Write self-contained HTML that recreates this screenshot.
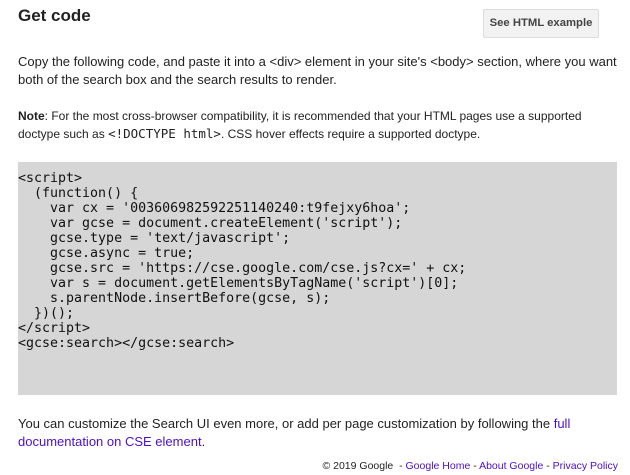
<!DOCTYPE html>
<html><head><style>
body{margin:0;background:#fff;font-family:"Liberation Sans",Arial,sans-serif;color:#222;width:630px;height:475px;overflow:hidden;position:relative}
.a{position:absolute;left:18px;white-space:nowrap}
h1{position:absolute;left:18px;top:6px;margin:0;font-size:17px;font-weight:bold}
.btn{position:absolute;left:483px;top:9px;width:114px;height:27px;background:#f2f2f2;border:1px solid #dcdcdc;border-radius:2px;font-size:11.3px;font-weight:bold;color:#444;text-align:center;line-height:27px}
.p{font-size:13px;line-height:18px}
.n{font-size:12px;line-height:17px}
pre{position:absolute;left:18px;top:162px;width:599px;height:233px;margin:0;background:#d6d6d6;font-family:"DejaVu Sans Mono",monospace;font-size:13.3px;line-height:15px;padding:9px 0 0 0;box-sizing:border-box;color:#111}
a{color:#4b0fcc;text-decoration:none}
.f{position:absolute;right:12px;top:460px;font-size:10.5px;color:#222;white-space:nowrap}
code{font-family:"DejaVu Sans Mono",monospace;font-size:12.5px}
</style></head><body>
<h1>Get code</h1>
<div class="btn">See HTML example</div>
<div class="a p" style="top:53px">Copy the following code, and paste it into a &lt;div&gt; element in your site's &lt;body&gt; section, where you want<br>both of the search box and the search results to render.</div>
<div class="a n" style="top:108px"><b>Note</b>: For the most cross-browser compatibility, it is recommended that your HTML pages use a supported<br>doctype such as <code>&lt;!DOCTYPE html&gt;</code>. CSS hover effects require a supported doctype.</div>
<pre>&lt;script&gt;
  (function() {
    var cx = '003606982592251140240:t9fejxy6hoa';
    var gcse = document.createElement('script');
    gcse.type = 'text/javascript';
    gcse.async = true;
    gcse.src = 'https://cse.google.com/cse.js?cx=' + cx;
    var s = document.getElementsByTagName('script')[0];
    s.parentNode.insertBefore(gcse, s);
  })();
&lt;/script&gt;
&lt;gcse:search&gt;&lt;/gcse:search&gt;</pre>
<div class="a p" style="top:415px">You can customize the Search UI even more, or add per page customization by following the <a>full</a><br><a>documentation on CSE element</a>.</div>
<div class="f">© 2019 Google &nbsp;- <a>Google Home</a> - <a>About Google</a> - <a>Privacy Policy</a></div>
</body></html>
